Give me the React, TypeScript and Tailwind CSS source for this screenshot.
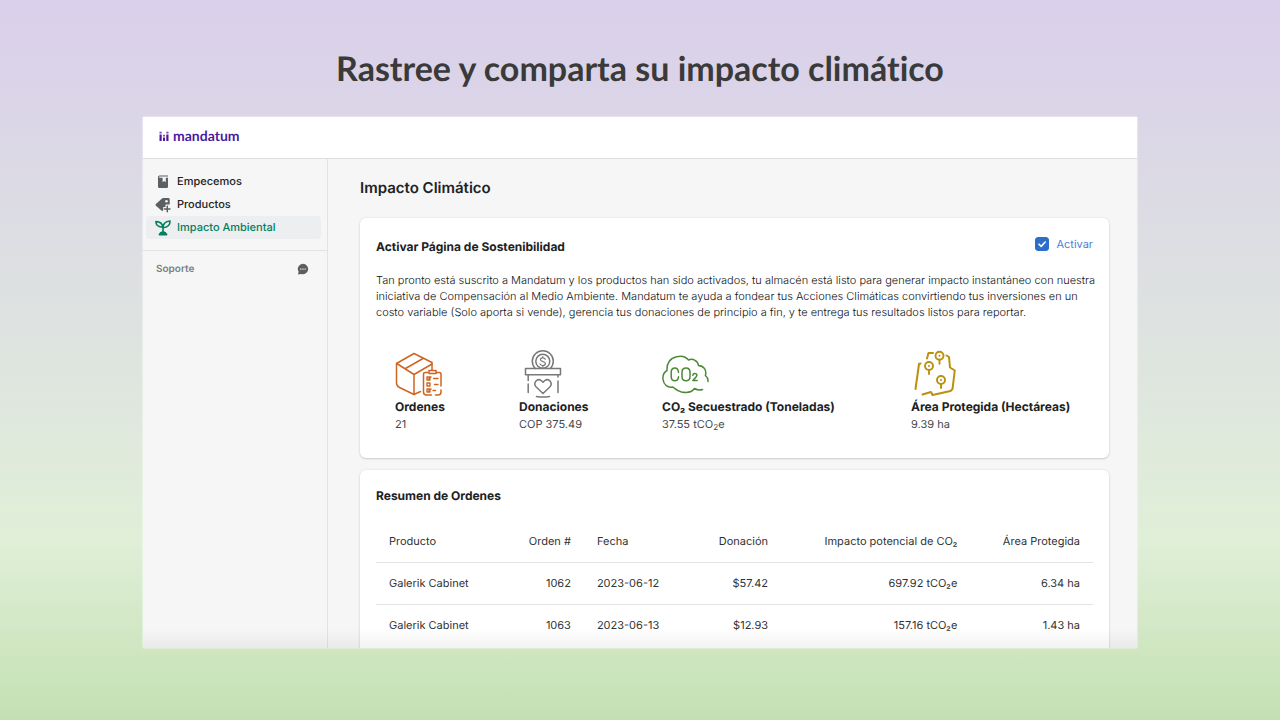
import type { ReactNode } from 'react';

// ---------------------------------------------------------------------------
// Data
// ---------------------------------------------------------------------------

type Order = {
  id: string;
  product: string;
  date: string;
  donation: string;
  co2: string;
  area: string;
};

const ORDERS: Order[] = [
  { id: '1062', product: 'Galerik Cabinet', date: '2023-06-12', donation: '$57.42', co2: '697.92 tCO₂e', area: '6.34 ha' },
  { id: '1063', product: 'Galerik Cabinet', date: '2023-06-13', donation: '$12.93', co2: '157.16 tCO₂e', area: '1.43 ha' },
];

const STATS: { label: string; value: ReactNode; icon: ReactNode }[] = [
  { label: 'Ordenes', value: '21', icon: <BoxIcon /> },
  { label: 'Donaciones', value: 'COP 375.49', icon: <DonationIcon /> },
  { label: 'CO₂ Secuestrado (Toneladas)', value: <>37.55 tCO<sub>2</sub>e</>, icon: <CloudIcon /> },
  { label: 'Área Protegida (Hectáreas)', value: '9.39 ha', icon: <MapIcon /> },
];

const NAV = [
  { label: 'Empecemos', icon: <BookIcon />, active: false },
  { label: 'Productos', icon: <TagIcon />, active: false },
  { label: 'Impacto Ambiental', icon: <PlantIcon />, active: true },
];

// ---------------------------------------------------------------------------
// Sidebar icons
// ---------------------------------------------------------------------------

function BookIcon() {
  return (
    <svg viewBox="0 0 16 16" className="h-4 w-4" fill="#5c5f62" aria-hidden="true">
      <path d="M4.500 1.500H13v1H4.600a.6.6 0 0 0 0 1.200H7.600v4.600l1.600-1.200 1.600 1.200V3.700H13v9.100a1.200 1.200 0 0 1-1.200 1.200H4.200A1.200 1.200 0 0 1 3 12.800V3A1.500 1.500 0 0 1 4.500 1.500Z" />
    </svg>
  );
}

function TagIcon() {
  return (
    <svg viewBox="0 0 16 16" className="h-4 w-4" aria-hidden="true">
      <path d="M8.300 1h5a1.400 1.400 0 0 1 1.400 1.400v5.200h-4.200v2.300H8.200v3.500L7 14 .9 8.800a1.300 1.300 0 0 1 0-1.800L7 1.600A2 2 0 0 1 8.300 1Z" fill="#5c5f62" />
      <circle cx="11.500" cy="4.300" r="1.300" fill="#f6f6f7" />
      <path d="M12.300 9.300v5.500M9.500 12.100H15" stroke="#5c5f62" strokeWidth="1.500" strokeLinecap="round" />
    </svg>
  );
}

function PlantIcon() {
  return (
    <svg viewBox="0 0 16 16" className="h-4 w-4" fill="none" stroke="#008060" strokeWidth="1.600" strokeLinejoin="round" aria-hidden="true">
      <path d="M8 12.500V8C8 4 10.500 1.300 15 1c.2 3.800-2 6.200-7 6.700" />
      <path d="M8 7.300C7.300 3.500 4.800 1.500.9 1.600c0 3.300 2 5.700 7.100 5.700Z" />
      <path d="M4 15c.2-2 1.700-3.200 4-3.200S11.800 13 12 15Z" fill="#008060" strokeWidth="1" />
    </svg>
  );
}

function ChatIcon() {
  return (
    <svg viewBox="0 0 12 12" className="h-3 w-3" aria-hidden="true">
      <path d="M6 .8A5.200 5.200 0 1 1 4.200 10.900L1 11.400l.6-2.700A5.200 5.200 0 0 1 6 .8Z" fill="#5c5f62" />
      <path d="M3.100 5.400h1.400v1.300H3.100zM5.300 5.400h1.400v1.300H5.300zM7.500 5.400h1.400v1.300H7.500z" fill="#d9dadc" />
    </svg>
  );
}

// ---------------------------------------------------------------------------
// Stat icons
// ---------------------------------------------------------------------------

function BoxIcon() {
  return (
    <svg viewBox="0 0 48 48" className="h-12 w-12" fill="none" stroke="#cf6423" strokeWidth="1.500" strokeLinecap="round" strokeLinejoin="round" aria-hidden="true">
      <path d="M19 44.500L4.500 37.500Q1.500 36 1.500 33V13.500L19 3.500l18 9v7.500" />
      <path d="M1.800 13.500L19 24.500l18-10.500M10.500 18.500L28 8.500M19 24.500v20l6.500-3" />
      <path d="M32.500 22.500H30a1.500 1.500 0 0 0-1.500 1.500v18a3 3 0 0 0 3 3h5M40.500 45h2.500a3 3 0 0 0 3-3v-2M46 36V24a1.500 1.500 0 0 0-1.500-1.500h-3M34 20.500h7v3h-7z" />
      <path d="M32 27h3v3h-3zM32 33h3v3h-3zM32 39h3v3h-3zM38.500 28.500h4.500M39.500 34.500h3.500M38 40.500h2.500M34 28.500l2-1.500M34 40.500l2-1.500" strokeWidth="1.400" />
    </svg>
  );
}

function DonationIcon() {
  return (
    <svg viewBox="0 0 48 48" className="h-12 w-12" fill="none" stroke="#7a7878" strokeWidth="1.500" strokeLinecap="round" strokeLinejoin="round" aria-hidden="true">
      <path d="M16.200 18.500a10.500 10.500 0 1 1 15.200 0" />
      <circle cx="23.800" cy="11.300" r="7" />
      <path d="M26.300 9.300c-.4-1-1.300-1.500-2.500-1.500-1.400 0-2.400.7-2.400 1.800 0 2.700 5 1.300 5 4 0 1.200-1.100 2-2.600 2-1.400 0-2.400-.6-2.700-1.700M23.800 6.500v1.300M23.800 15.600v1.200" strokeWidth="1.200" />
      <path d="M6.500 18.500h35v6.300h-35z" />
      <path d="M9.200 25v5.500M9.200 34v8.500M39 25v2M39 31v11.500" />
      <path d="M24 43.500L17.200 37c-3.700-3.800 1-9.300 5-6.500L24 32.300l1.800-1.800c4-2.800 8.700 2.700 5 6.500L24 43.500Z" />
      <path d="M17.500 46.500q6.500 1.200 13 0" />
    </svg>
  );
}

function CloudIcon() {
  return (
    <svg viewBox="0 0 48 48" className="h-12 w-12" fill="none" stroke="#4b8a36" strokeWidth="1.500" strokeLinecap="round" strokeLinejoin="round" aria-hidden="true">
      <path d="M46 31.500c.2-2.500-.7-4.500-2.600-6 1.500-5.500-1.500-9.500-6.900-10-.5-4.500-5.500-7.500-10-5.500-3-3.700-8-4.300-12-3.200C8.500 8 4.500 13 5 20.500c-3 1.800-4.500 5-4 9 .7 5.500 5 8.500 9.500 7.500 2 .5 3 3.500 9 4.900 5 1 10.500.3 13-3.400 2.500 1.500 5 2 8 1" />
      <path d="M16.500 22.300c-.3-2.800-1.700-4.300-3.500-4.300-2.500 0-3.800 1.500-3.800 4.300v4.200c0 2.800 1.300 4.300 3.800 4.300 1.900 0 3.200-1.300 3.500-4M20 22.300c0-2.800 1.500-4.300 4-4.300s4 1.500 4 4.300v4.200c0 2.800-1.500 4.300-4 4.300s-4-1.500-4-4.300v-4.200Z" />
      <path d="M30.800 25.300c.2-1.200 1-1.800 2-1.800 1.300 0 2.100.8 2.100 1.800 0 1.800-2.400 2.800-4.100 5.300h4.300" />
    </svg>
  );
}

function MapIcon() {
  return (
    <svg viewBox="0 0 48 48" className="h-12 w-12" fill="none" stroke="#bd8f0e" strokeWidth="2" strokeLinecap="round" strokeLinejoin="round" aria-hidden="true">
      <path d="M9.500 13.500L8 14l-3.500 25M16 8.500l1.500-5.500h4.500M35.500 5.500l2.500 1.500 1 10.500L43.800 20.500 41.500 39l-2 2-18 4-1.500-3-8.500 2.500" />
      <g strokeWidth="1.900">
        <circle cx="28.500" cy="5.800" r="4" />
        <path d="M28.500 9.800v4" />
        <circle cx="18" cy="16" r="4" />
        <path d="M18 20v4" />
        <circle cx="30" cy="30" r="4" />
        <path d="M30 34v4" />
      </g>
      <path d="M28.500 5.800h.01M18 16h.01M30 30h.01" />
    </svg>
  );
}

// ---------------------------------------------------------------------------
// Shell
// ---------------------------------------------------------------------------

function Logo() {
  return (
    <a href="#" className="flex items-center gap-1 text-[#4a1aa0]">
      <svg viewBox="0 0 10 12" className="h-3 w-2.5" fill="currentColor" aria-hidden="true">
        <path d="M.5 4.500h2.200V11H.5zM4 7.500h2V11H4zM7.300 4.500h2.200V11H7.300z" />
        <path d="M.5 1.800h2.200v1.800H.5zM4 4.800h2v1.700H4zM7.300 1.800h2.200v1.800H7.300z" opacity=".75" />
      </svg>
      <span className="font-['Lato',sans-serif] text-sm leading-5 font-bold">mandatum</span>
    </a>
  );
}

function Sidebar() {
  return (
    <aside className="w-[185px] shrink-0 border-r border-[#e1e3e5] pt-[11px]">
      <nav className="flex flex-col pr-1.5 pl-[3px]">
        {NAV.map((item) => (
          <a
            key={item.label}
            href="#"
            className={`flex h-[23px] items-center gap-1.5 rounded pl-[9px] text-[11px] font-medium ${
              item.active ? 'bg-[#edeeef] text-[#008060]' : 'text-[#202223]'
            }`}
          >
            {item.icon}
            {item.label}
          </a>
        ))}
      </nav>
      <div className="mt-[11px] flex items-center justify-between border-t border-[#e1e3e5] py-2.5 pr-[18px] pl-[13px]">
        <span className="text-[10px] leading-4 font-semibold text-[#7b7e81]">Soporte</span>
        <button type="button" aria-label="Abrir chat de soporte">
          <ChatIcon />
        </button>
      </div>
    </aside>
  );
}

// ---------------------------------------------------------------------------
// Cards
// ---------------------------------------------------------------------------

function ImpactCard() {
  return (
    <section className="rounded-md bg-white px-4 pt-[18px] pb-[26px] shadow-[0_0_3px_rgba(23,24,24,0.08),0_1px_2px_rgba(0,0,0,0.15)]">
      <div className="flex items-start justify-between">
        <h2 className="pt-px text-xs leading-5 font-bold">Activar Página de Sostenibilidad</h2>
        <label className="flex items-center gap-[7px] text-[11px] leading-4 text-[#4a7fd6]">
          <span className="relative flex">
            <input type="checkbox" defaultChecked className="peer h-3.5 w-3.5 appearance-none rounded-[3px] border border-[#8c9196] checked:border-[#2c6ecb] checked:bg-[#2c6ecb]" />
            <svg viewBox="0 0 14 14" className="pointer-events-none absolute inset-0 hidden h-3.5 w-3.5 peer-checked:block" fill="none" stroke="#fff" strokeWidth="1.600" strokeLinecap="round" strokeLinejoin="round" aria-hidden="true">
              <path d="M4 7.200l2.200 2.200L10.200 5" />
            </svg>
          </span>
          Activar
        </label>
      </div>
      <p className="-mr-2.5 mt-[15px] text-[11px] leading-4 font-light text-[#111213]">
        Tan pronto está suscrito a Mandatum y los productos han sido activados, tu almacén está listo para generar impacto instantáneo con nuestra
        iniciativa de Compensación al Medio Ambiente. Mandatum te ayuda a fondear tus Acciones Climáticas convirtiendo tus inversiones en un
        costo variable (Solo aporta si vende), gerencia tus donaciones de principio a fin, y te entrega tus resultados listos para reportar.
      </p>
      <div className="mt-[30px] grid grid-cols-[124fr_143fr_249fr_163fr] px-[19px] whitespace-nowrap">
        {STATS.map((s) => (
          <div key={s.label}>
            {s.icon}
            <h3 className="text-xs leading-[18px] font-bold">{s.label}</h3>
            <div className="text-[11px] leading-4 text-[#45484b]">{s.value}</div>
          </div>
        ))}
      </div>
    </section>
  );
}

function OrdersCard() {
  return (
    <section className="mt-3 rounded-md bg-white px-4 pt-4 pb-5 shadow-[0_0_3px_rgba(23,24,24,0.08),0_1px_2px_rgba(0,0,0,0.15)]">
      <h2 className="text-xs leading-5 font-bold">Resumen de Ordenes</h2>
      <table className="mt-3.5 w-full table-fixed border-collapse text-[11px] leading-4 text-[#303234]">
        <colgroup>
          <col className="w-[19%]" />
          <col className="w-[10%]" />
          <col className="w-[13%]" />
          <col className="w-[14.5%]" />
          <col className="w-[26.4%]" />
          <col />
        </colgroup>
        <thead>
          <tr className="h-[42px] border-b border-[#e1e3e5]">
            <th className="pl-[13px] text-left font-normal">Producto</th>
            <th className="pr-[13px] text-right font-normal">Orden #</th>
            <th className="pl-[13px] text-left font-normal">Fecha</th>
            <th className="pr-[13px] text-right font-normal">Donación</th>
            <th className="pr-[13px] text-right font-normal">Impacto potencial de CO₂</th>
            <th className="pr-[13px] text-right font-normal">Área Protegida</th>
          </tr>
        </thead>
        <tbody>
          {ORDERS.map((o) => (
            <tr key={o.id} className="h-[42px] border-b border-[#e1e3e5] last:border-b-0">
              <td className="pl-[13px]">{o.product}</td>
              <td className="pr-[13px] text-right">{o.id}</td>
              <td className="pl-[13px]">{o.date}</td>
              <td className="pr-[13px] text-right">{o.donation}</td>
              <td className="pr-[13px] text-right">{o.co2}</td>
              <td className="pr-[13px] text-right">{o.area}</td>
            </tr>
          ))}
        </tbody>
      </table>
    </section>
  );
}

export default function App() {
  return (
    <div className="flex h-screen flex-col bg-linear-to-b from-[#dacfeb] via-[#e0efd8] via-75% to-[#c4e0b2] px-[143px] pt-[45px] pb-[72px] [text-rendering:geometricPrecision]">
      <h1 className="text-center font-['Lato',sans-serif] text-[34px] leading-12 font-bold text-[#3b3a3a] [font-variant-ligatures:none]">
        Rastree y comparta su impacto climático
      </h1>
      <div className="relative mt-6 flex min-h-0 flex-1 flex-col overflow-hidden bg-[#f6f6f7] font-['Inter',sans-serif] text-[#202223] shadow-[0_0_2px_rgba(255,255,255,0.9)]">
        <header className="flex h-[42px] shrink-0 items-center border-b border-[#dcdee0] bg-white pb-1 pl-4">
          <Logo />
        </header>
        <div className="flex min-h-0 flex-1">
          <Sidebar />
          <main className="min-w-0 flex-1 overflow-hidden pt-4 pr-7 pl-8">
            <h1 className="mb-[17px] text-[15px] leading-[26px] font-semibold">Impacto Climático</h1>
            <ImpactCard />
            <OrdersCard />
          </main>
        </div>
        <div className="pointer-events-none absolute inset-x-0 bottom-0 h-5 bg-linear-to-b from-transparent to-black/5" />
      </div>
    </div>
  );
}
